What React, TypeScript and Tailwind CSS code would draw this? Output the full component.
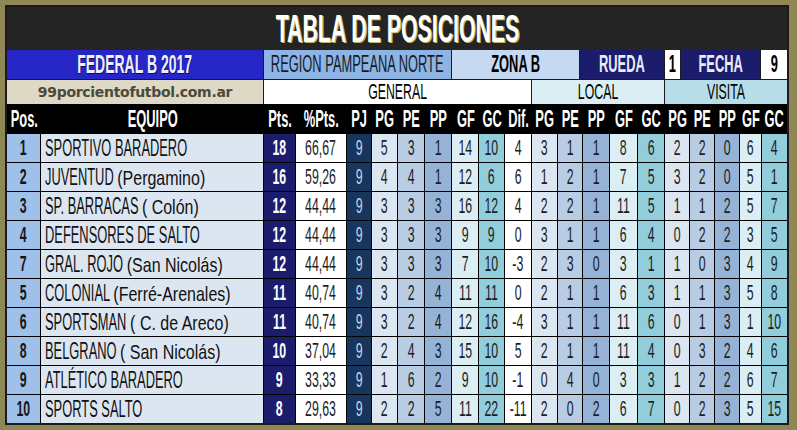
const NARROW = "font-['Liberation_Sans',Arial,sans-serif]"

const COLS =
  'grid grid-cols-[34px_223px_32px_51px_25px_26px_27px_27px_27px_26px_27px_26px_25px_27px_28px_27px_25px_25px_25px_22px_25px]'

const HEADERS = ['Pos.', 'EQUIPO', 'Pts.', '%Pts.', 'PJ', 'PG', 'PE', 'PP', 'GF', 'GC', 'Dif.', 'PG', 'PE', 'PP', 'GF', 'GC', 'PG', 'PE', 'PP', 'GF', 'GC']

// background for each stat column after the team name
const STAT_BG = [
  'bg-[#1c1c6c] text-white font-bold',
  'bg-white text-[#1d1d1d]',
  'bg-[#17365d] text-[#c9d2e2]',
  'bg-[#dce6f1]',
  'bg-[#b8cce4]',
  'bg-[#95b3d7]',
  'bg-[#daeef3]',
  'bg-[#92cddc]',
  'bg-white',
  'bg-[#dce6f1]',
  'bg-[#b8cce4]',
  'bg-[#95b3d7]',
  'bg-[#daeef3]',
  'bg-[#92cddc]',
  'bg-[#dce6f1]',
  'bg-[#b8cce4]',
  'bg-[#95b3d7]',
  'bg-[#daeef3]',
  'bg-[#92cddc]',
]

const ROWS: { pos: string; name: string; place?: string; stats: string[] }[] = [
  { pos: '1', name: 'SPORTIVO BARADERO', stats: ['18', '66,67', '9', '5', '3', '1', '14', '10', '4', '3', '1', '1', '8', '6', '2', '2', '0', '6', '4'] },
  { pos: '2', name: 'JUVENTUD', place: '(Pergamino)', stats: ['16', '59,26', '9', '4', '4', '1', '12', '6', '6', '1', '2', '1', '7', '5', '3', '2', '0', '5', '1'] },
  { pos: '3', name: 'SP. BARRACAS', place: '( Colón)', stats: ['12', '44,44', '9', '3', '3', '3', '16', '12', '4', '2', '2', '1', '11', '5', '1', '1', '2', '5', '7'] },
  { pos: '4', name: 'DEFENSORES DE SALTO', stats: ['12', '44,44', '9', '3', '3', '3', '9', '9', '0', '3', '1', '1', '6', '4', '0', '2', '2', '3', '5'] },
  { pos: '7', name: 'GRAL. ROJO', place: '(San Nicolás)', stats: ['12', '44,44', '9', '3', '3', '3', '7', '10', '-3', '2', '3', '0', '3', '1', '1', '0', '3', '4', '9'] },
  { pos: '5', name: 'COLONIAL', place: '(Ferré-Arenales)', stats: ['11', '40,74', '9', '3', '2', '4', '11', '11', '0', '2', '1', '1', '6', '3', '1', '1', '3', '5', '8'] },
  { pos: '6', name: 'SPORTSMAN', place: '( C. de Areco)', stats: ['11', '40,74', '9', '3', '2', '4', '12', '16', '-4', '3', '1', '1', '11', '6', '0', '1', '3', '1', '10'] },
  { pos: '8', name: 'BELGRANO', place: '( San Nicolás)', stats: ['10', '37,04', '9', '2', '4', '3', '15', '10', '5', '2', '1', '1', '11', '4', '0', '3', '2', '4', '6'] },
  { pos: '9', name: 'ATLÉTICO BARADERO', stats: ['9', '33,33', '9', '1', '6', '2', '9', '10', '-1', '0', '4', '0', '3', '3', '1', '2', '2', '6', '7'] },
  { pos: '10', name: 'SPORTS SALTO', stats: ['8', '29,63', '9', '2', '2', '5', '11', '22', '-11', '2', '0', '2', '6', '7', '0', '2', '3', '5', '15'] },
]

// squeezed text, stands in for the tall condensed face of the original sheet
function Cond({ children, className = '' }: { children: React.ReactNode; className?: string }) {
  return <span className={`inline-block scale-x-[0.56] whitespace-nowrap leading-none ${NARROW} ${className}`}>{children}</span>
}

export default function App() {
  return (
    <div className="w-[797px] h-[430px] bg-[#8f8756] pl-[5px] pt-[5px]">
      <div className="w-[784px] border-2 border-[#1b1b1b] bg-black">
        {/* Title */}
        <div className="h-[43px] bg-[#242424] flex items-center justify-center">
          <Cond className="text-[38px] font-bold text-white [text-shadow:2px_1px_0_#c6b05c]">TABLA DE POSICIONES</Cond>
        </div>

        {/* Competition info */}
        <div className="h-[30px] flex border-b border-[#1b1b1b]">
          <div className="w-[257px] bg-[#2626c6] border-r border-[#1b1b1b] flex items-center justify-center">
            <Cond className="text-[25px] font-bold text-[#eef0ff] [text-shadow:1px_1px_0_#0c0c50]">FEDERAL B 2017</Cond>
          </div>
          <div className="w-[188px] bg-[#8db4e2] border-r border-[#1b1b1b] flex items-center justify-center">
            <Cond className="text-[23px] text-[#141c2c]">REGION PAMPEANA NORTE</Cond>
          </div>
          <div className="w-[128px] bg-[#c5d9f1] border-r border-[#1b1b1b] flex items-center justify-center">
            <Cond className="text-[23px] font-bold text-black">ZONA B</Cond>
          </div>
          <div className="w-[85px] bg-[#1c1c6c] border-r border-[#1b1b1b] flex items-center justify-center">
            <Cond className="text-[23px] font-bold text-[#e8ecf8]">RUEDA</Cond>
          </div>
          <div className="w-[16px] bg-white border-r border-[#1b1b1b] flex items-center justify-center">
            <Cond className="text-[23px] font-bold text-black">1</Cond>
          </div>
          <div className="w-[80px] bg-[#1c1c6c] border-r border-[#1b1b1b] flex items-center justify-center">
            <Cond className="text-[23px] font-bold text-[#e8ecf8]">FECHA</Cond>
          </div>
          <div className="w-[26px] bg-white flex items-center justify-center">
            <Cond className="text-[23px] font-bold text-black">9</Cond>
          </div>
        </div>

        {/* Site + groups */}
        <div className="h-[24px] flex">
          <div className="w-[257px] bg-[#ddd9c4] border-r border-[#1b1b1b] flex items-center justify-center">
            <span className="font-['DejaVu_Sans',sans-serif] font-bold text-[14px] text-[#4b4a3c] tracking-[-0.3px]">99porcientofutbol.com.ar</span>
          </div>
          <div className="w-[268px] bg-white border-r border-[#1b1b1b] flex items-center justify-center">
            <Cond className="text-[22px] text-black">GENERAL</Cond>
          </div>
          <div className="w-[133px] bg-[#daeef3] border-r border-[#1b1b1b] flex items-center justify-center">
            <Cond className="text-[22px] text-black">LOCAL</Cond>
          </div>
          <div className="w-[122px] bg-[#b7dee8] flex items-center justify-center">
            <Cond className="text-[22px] text-black">VISITA</Cond>
          </div>
        </div>

        {/* Column headers */}
        <div className={`${COLS} h-[30px] bg-black`}>
          {HEADERS.map((h, i) => (
            <div key={i} className="flex items-center justify-center">
              <Cond className="text-[23px] font-bold text-white">{h}</Cond>
            </div>
          ))}
        </div>

        {/* Rows */}
        {ROWS.map((r, ri) => (
          <div key={ri} className={`${COLS} ${ri === ROWS.length - 1 ? 'h-[28px]' : 'h-[29px] border-b border-black'}`}>
            <div className="bg-[#9fc0e8] border-r border-black flex items-center justify-center">
              <Cond className="text-[22px] font-bold text-[#161616]">{r.pos}</Cond>
            </div>
            <div className="bg-[#dce6f1] border-r border-black flex items-center pl-[4px] overflow-hidden">
              <span className={`inline-block origin-left scale-x-[0.56] whitespace-nowrap leading-none text-[#111] ${NARROW} text-[23px]`}>
                {r.name}
                {r.place && (
                  <>
                    {' '}
                    <span className="inline-block origin-left scale-x-[1.36] text-[21px]">{r.place}</span>
                  </>
                )}
              </span>
            </div>
            {r.stats.map((v, si) => (
              <div
                key={si}
                className={`${STAT_BG[si]} ${si === r.stats.length - 1 ? '' : 'border-r border-black'} flex items-center justify-center text-[#1d1d1d]`}
              >
                <Cond className="text-[22px]">{v}</Cond>
              </div>
            ))}
          </div>
        ))}
      </div>
    </div>
  )
}
